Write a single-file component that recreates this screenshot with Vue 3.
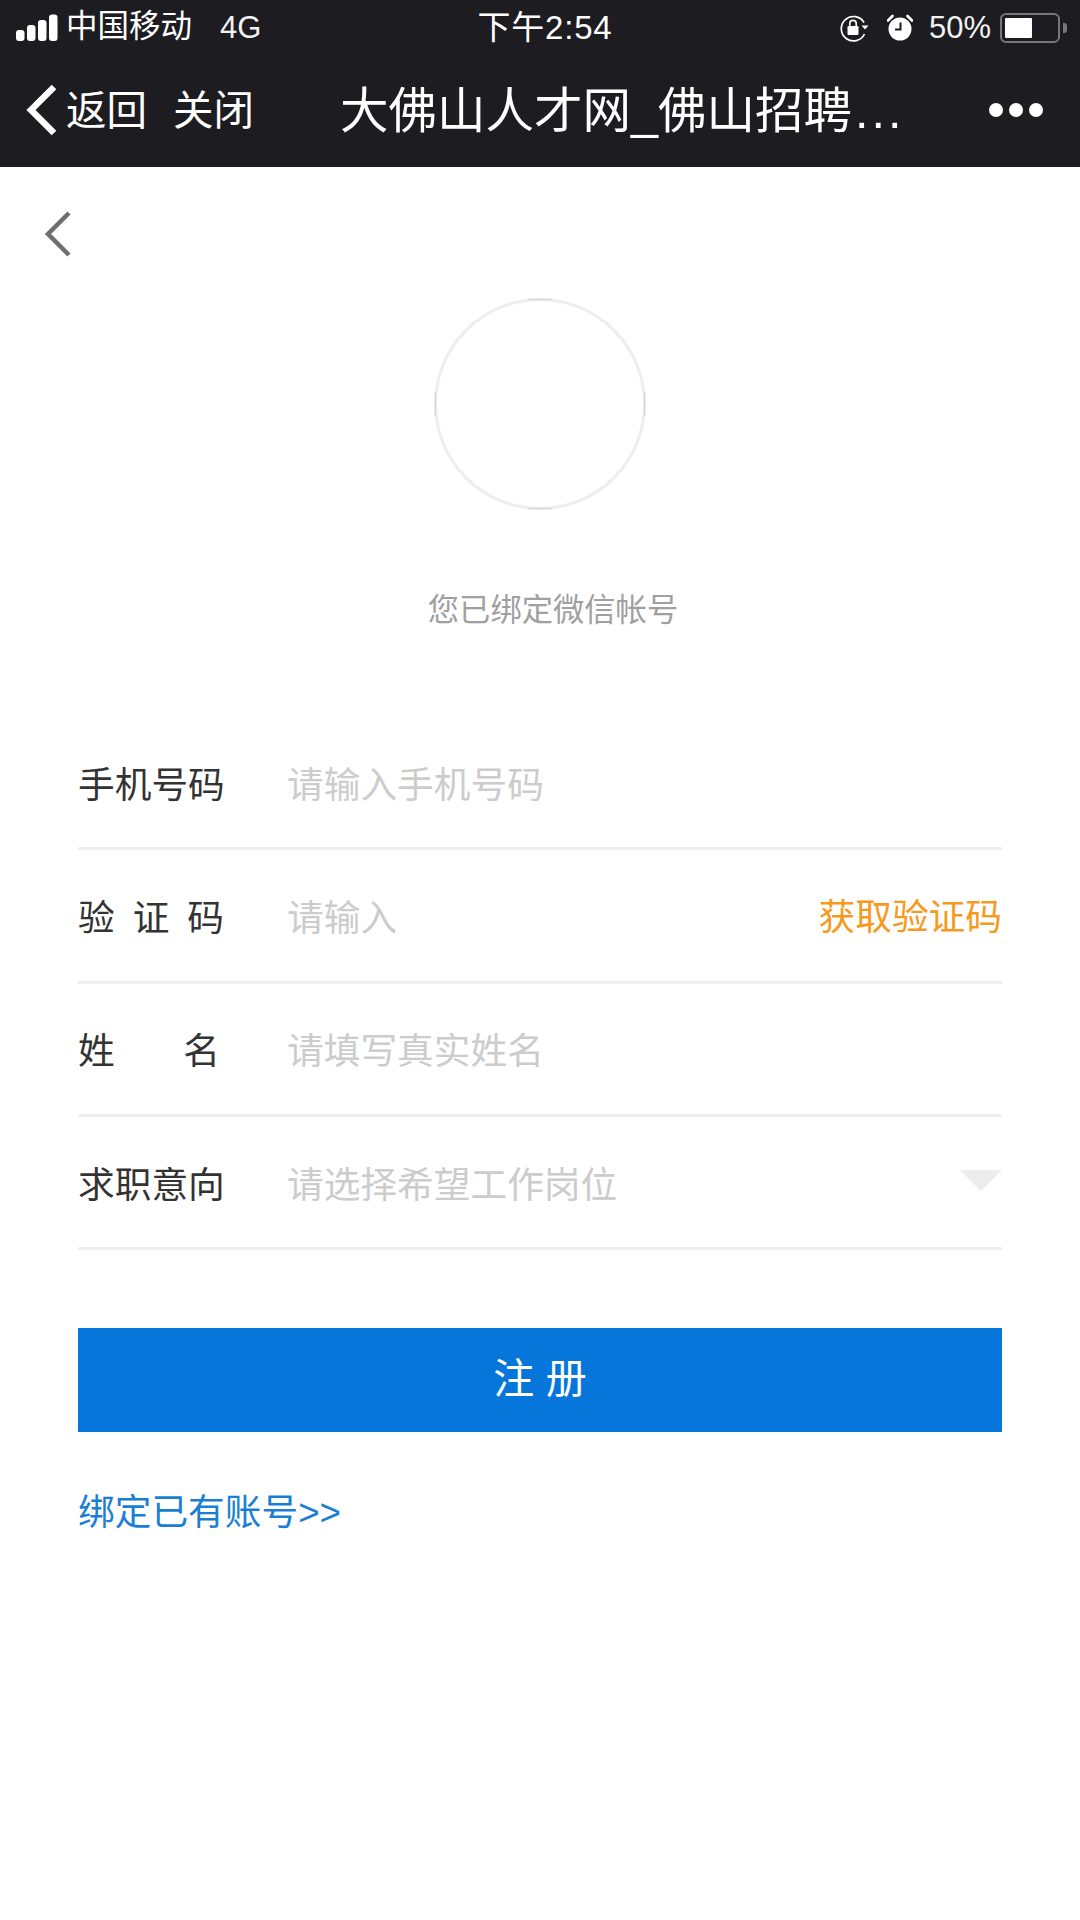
<script setup>
const rows = [
  { label: ['手', '机', '号', '码'], placeholder: '请输入手机号码' },
  { label: ['验', '证', '码'], placeholder: '请输入', action: '获取验证码' },
  { label: ['姓', '名'], placeholder: '请填写真实姓名', narrow: true },
  { label: ['求', '职', '意', '向'], placeholder: '请选择希望工作岗位', select: true }
]
</script>

<template>
  <div class="page">
    <header class="top">
      <div class="status">
        <div class="status-left">
          <svg class="signal" width="42" height="28" viewBox="0 0 42 28">
            <rect x="0" y="16" width="8.500" height="11" rx="3" fill="#fff" />
            <rect x="11" y="11" width="8.500" height="16" rx="3" fill="#fff" />
            <rect x="22" y="6" width="8.500" height="21" rx="3" fill="#fff" />
            <rect x="33" y="0.500" width="8.500" height="26.500" rx="3" fill="#fff" />
          </svg>
          <span class="carrier">中国移动</span>
          <span class="net">4G</span>
        </div>
        <div class="time">下午2:54</div>
        <div class="status-right">
          <svg width="30" height="28" viewBox="0 0 30 28">
            <path d="M24 8.5A12.2 12.2 0 1 0 24.5 20" fill="none" stroke="#fff" stroke-width="1.7" />
            <path d="M21.5 11.5h7l-3.5 4z" fill="#fff" />
            <rect x="7.5" y="12" width="11" height="9" rx="1.2" fill="#fff" />
            <path d="M9.8 12V9.6a3.2 3.2 0 0 1 6.4 0V12" fill="none" stroke="#fff" stroke-width="1.6" />
          </svg>
          <svg class="alarm" width="26" height="28" viewBox="0 0 26 28">
            <circle cx="13" cy="15" r="11.5" fill="#fff" />
            <path d="M13.5 8.5v7H8" fill="none" stroke="#1c1c21" stroke-width="2" />
            <path d="M1 6.5L5.5 2M25 6.5L20.500 2" stroke="#fff" stroke-width="2.6" stroke-linecap="round" />
          </svg>
          <span class="battery-text">50%</span>
          <div class="battery">
            <div class="battery-body"><div class="battery-fill"></div></div>
            <div class="battery-cap"></div>
          </div>
        </div>
      </div>
      <div class="nav">
        <svg class="nav-back" width="32" height="52" viewBox="0 0 32 52">
          <path d="M28 3L5 26l23 23" fill="none" stroke="#fff" stroke-width="6.5" />
        </svg>
        <span class="nav-link first">返回</span>
        <span class="nav-link second">关闭</span>
        <span class="nav-title">大佛山人才网_佛山招聘<span class="ellipsis">...</span></span>
        <div class="dots"><i></i><i></i><i></i></div>
      </div>
    </header>

    <main class="content">
      <svg class="back" width="28" height="46" viewBox="0 0 28 46">
        <path d="M25 2L4 23l21 21" fill="none" stroke="#6e6e6e" stroke-width="4.500" />
      </svg>
      <svg class="avatar" width="212" height="212" viewBox="0 0 212 212">
        <circle cx="106" cy="106" r="104.500" fill="#fff" stroke="#eeeeee" stroke-width="3" />
        <path d="M94 1.500h24M94 210.500h24M1.500 94v24M210.500 94v24" stroke="#d9d9d9" stroke-width="1.500" fill="none" />
      </svg>
      <p class="bound">您已绑定微信帐号</p>

      <form class="form">
        <div v-for="row in rows" :key="row.placeholder" class="row">
          <div class="label" :class="{ narrow: row.narrow }"><span v-for="c in row.label" :key="c">{{ c }}</span></div>
          <div class="placeholder">{{ row.placeholder }}</div>
          <span v-if="row.action" class="action">{{ row.action }}</span>
          <span v-if="row.select" class="caret"></span>
        </div>
      </form>

      <button class="submit" type="button">注 册</button>
      <a class="bind">绑定已有账号&gt;&gt;</a>
    </main>
  </div>
</template>

<style>
html, body { margin: 0; background: #fff; }
</style>

<style scoped>
.page {
  width: 1080px;
  height: 1920px;
  background: #fff;
  overflow: hidden;
  font-family: "Liberation Sans", "Noto Sans CJK SC", sans-serif;
}
.top { height: 167px; background: #1c1c21; color: #fff; }
.status {
  height: 55px;
  padding: 0 13px 0 16px;
  display: grid;
  grid-template-columns: 1fr auto 1fr;
  align-items: center;
}
.status-left, .status-right { display: flex; align-items: center; }
.status-right { justify-content: flex-end; }
.signal { margin-right: 8px; }
.carrier { font-size: 31.5px; line-height: 1; margin-top: -1px; }
.net { font-size: 31px; line-height: 1; margin-left: 28px; color: #f2f2f2; }
.time { font-size: 33px; line-height: 1; margin: -1px 0 0 7px; letter-spacing: 0.8px; }
.alarm { margin-left: 17px; }
.battery-text { font-size: 31px; margin-left: 16px; color: #f2f2f2; }
.battery { display: flex; align-items: center; margin-left: 9px; }
.battery-body {
  width: 60px;
  height: 30px;
  box-sizing: border-box;
  border: 2px solid #77777b;
  border-radius: 6px;
  padding: 3px;
}
.battery-fill { width: 27px; height: 100%; background: #fff; border-radius: 1px; }
.battery-cap {
  width: 4px;
  height: 10px;
  margin-left: 3px;
  background: #77777b;
  border-radius: 0 3px 3px 0;
}
.nav {
  height: 112px;
  padding-left: 26px;
  display: flex;
  align-items: center;
  position: relative;
}
.nav-back { flex: none; margin-top: -2px; }
.nav-link { font-size: 40.500px; line-height: 1; }
.first { margin-left: 8px; }
.second { margin-left: 26px; }
.nav-title {
  margin-left: 86px;
  font-size: 48.500px;
  line-height: 1;
  white-space: nowrap;
}
.ellipsis { letter-spacing: 3px; margin-left: 3px; }
.dots {
  position: absolute;
  right: 37px;
  top: 50%;
  margin-top: -8px;
  display: flex;
  gap: 6px;
}
.dots i { width: 14px; height: 14px; border-radius: 50%; background: #fff; }

.content {
  position: relative;
  padding: 131px 78px 0;
}
.back { position: absolute; left: 44px; top: 44px; }
.avatar { display: block; margin: 0 auto; }
.bound {
  margin: 82px 0 0;
  padding-left: 26px;
  text-align: center;
  font-size: 31.300px;
  line-height: 38px;
  color: #a0a0a0;
}
.form { margin-top: 87px; }
.row {
  height: 133.3px;
  box-sizing: border-box;
  border-bottom: 3px solid #eeeeee;
  padding-bottom: 1px;
  display: flex;
  align-items: center;
  font-size: 36.700px;
}
.label {
  width: 146px;
  margin-right: 63px;
  display: flex;
  justify-content: space-between;
  color: #333;
}
.label.narrow { width: 142px; margin-right: 67px; }
.placeholder { flex: 1; color: #cccccc; }
.action { color: #f59a1d; margin-top: -2px; }
.caret {
  width: 0;
  height: 0;
  border-left: 21px solid transparent;
  border-right: 21px solid transparent;
  border-top: 21px solid #ececec;
  margin-top: -3px;
}
.submit {
  display: block;
  width: 100%;
  height: 104px;
  margin-top: 78px;
  border: 0;
  padding: 0 0 11px;
  background: #0676db;
  color: #fff;
  font-family: inherit;
  font-size: 41px;
}
.bind {
  display: block;
  margin-top: 56px;
  font-size: 36.700px;
  line-height: 50px;
  color: #1a7fd4;
}
</style>
